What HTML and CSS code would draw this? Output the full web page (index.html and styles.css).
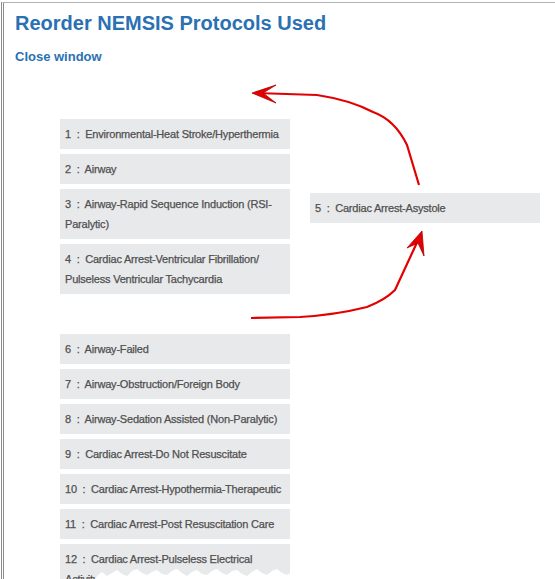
FILE: index.html
```html
<!DOCTYPE html>
<html>
<head>
<meta charset="utf-8">
<link rel="stylesheet" href="styles.css">
</head>
<body>
<div class="frame">
  <h1 class="title">Reorder NEMSIS Protocols Used</h1>
  <a class="close" href="#">Close window</a>
  <ul class="list">
    <li class="item">1 &nbsp;:&nbsp; Environmental-Heat Stroke/Hyperthermia</li>
    <li class="item">2 &nbsp;:&nbsp; Airway</li>
    <li class="item">3 &nbsp;:&nbsp; Airway-Rapid Sequence Induction (RSI-Paralytic)</li>
    <li class="item">4 &nbsp;:&nbsp; Cardiac Arrest-Ventricular Fibrillation/ Pulseless Ventricular Tachycardia</li>
    <li class="placeholder"></li>
    <li class="item">6 &nbsp;:&nbsp; Airway-Failed</li>
    <li class="item">7 &nbsp;:&nbsp; Airway-Obstruction/Foreign Body</li>
    <li class="item">8 &nbsp;:&nbsp; Airway-Sedation Assisted (Non-Paralytic)</li>
    <li class="item">9 &nbsp;:&nbsp; Cardiac Arrest-Do Not Resuscitate</li>
    <li class="item">10 &nbsp;:&nbsp; Cardiac Arrest-Hypothermia-Therapeutic</li>
    <li class="item">11 &nbsp;:&nbsp; Cardiac Arrest-Post Resuscitation Care</li>
    <li class="item">12 &nbsp;:&nbsp; Cardiac Arrest-Pulseless Electrical Activity</li>
  </ul>
</div>
<div class="item dragging">5 &nbsp;:&nbsp; Cardiac Arrest-Asystole</div>
<svg class="arrows" width="555" height="579" viewBox="0 0 555 579">
  <path d="M419,185 L407,145 Q395,120 373,112 Q350,100 317,95 L256,93" fill="none" stroke="#e30000" stroke-width="2.2" stroke-linejoin="round"/>
  <polygon points="252,93 276,85 263,93 276,103" fill="#e30000" stroke="#b00000" stroke-width="0.8"/>
  <path d="M251,318 L300,317 Q335,315 367,307 Q385,300 395,290 L420,236" fill="none" stroke="#e30000" stroke-width="2.2" stroke-linejoin="round"/>
  <polygon points="422,231 407,248 418,243 424,256" fill="#e30000" stroke="#b00000" stroke-width="0.8"/>
</svg>
<svg class="torn" width="555" height="12" viewBox="0 0 555 12">
  <polygon fill="#fff" points="95,12 98,8 102,5 107,9 112,6 117,3 122,7 127,9 132,4 137,2 142,6 147,8 152,5 157,3 162,7 167,8 172,4 177,2 182,6 187,9 192,5 197,3 202,7 207,8 212,4 217,2 222,6 227,8 232,4 237,3 242,7 247,9 252,5 257,2 262,6 267,8 272,4 277,2 282,6 287,8 292,5 297,3 302,7 555,7 555,12"/>
</svg>
</body>
</html>
```
FILE: styles.css
```css
html, body {
  margin: 0;
  padding: 0;
  background: #fff;
  overflow: hidden;
  height: 579px;
}
body {
  position: relative;
  font-family: "Liberation Sans", Arial, sans-serif;
}
.frame {
  margin: 2px 0 0 1px;
  border-top: 1px solid #b4b4b4;
  border-left: 3px double #8c8c8c;
  padding: 8px 0 0 11px;
  min-height: 800px;
}
.title {
  margin: 0;
  font-size: 20px;
  line-height: 24px;
  font-weight: bold;
  color: #2a71b3;
}
.close {
  display: block;
  margin-top: 14px;
  font-size: 13px;
  line-height: 16px;
  font-weight: bold;
  color: #2a71b3;
  text-decoration: none;
}
.list {
  list-style: none;
  margin: 54px 0 0 45px;
  padding: 0;
  width: 230px;
}
.item {
  box-sizing: border-box;
  width: 230px;
  background: #e8e9eb;
  padding: 5px 5px;
  margin-bottom: 5px;
  font-size: 11px;
  line-height: 20px;
  letter-spacing: -0.2px;
  font-weight: normal;
  color: #505050;
  -webkit-text-stroke: 0.25px #505050;
}
.placeholder {
  height: 35px;
}
.dragging {
  position: absolute;
  left: 310px;
  top: 193px;
  margin: 0;
}
.arrows {
  position: absolute;
  left: 0;
  top: 0;
}
.torn {
  position: absolute;
  left: 0;
  bottom: 0;
}
```
